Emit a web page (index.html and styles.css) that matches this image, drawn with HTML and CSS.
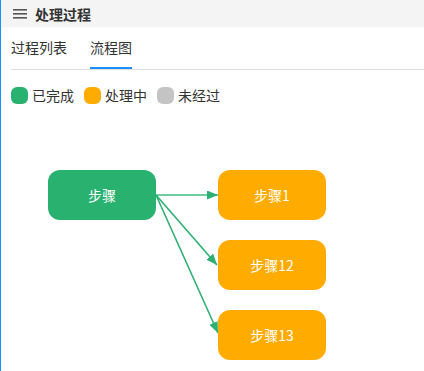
FILE: index.html
```html
<!DOCTYPE html>
<html lang="zh">
<head>
    <meta charset="UTF-8">
    <title>处理过程</title>
    <link rel="stylesheet" href="styles.css">
</head>
<body>
    <div class="page">
        <div class="header">
            <svg class="menu-icon" width="14" height="10" viewBox="0 0 14 10">
                <rect x="0" y="0" width="14" height="1.6" fill="#555"/>
                <rect x="0" y="4" width="14" height="1.6" fill="#555"/>
                <rect x="0" y="8" width="14" height="1.6" fill="#555"/>
            </svg>
            <span class="title">处理过程</span>
        </div>

        <div class="tabs">
            <div class="tab">过程列表</div>
            <div class="tab active">流程图</div>
        </div>

        <div class="legend">
            <div class="legend-item"><span class="dot done"></span>已完成</div>
            <div class="legend-item"><span class="dot doing"></span>处理中</div>
            <div class="legend-item"><span class="dot none"></span>未经过</div>
        </div>

        <div class="canvas">
            <svg class="edges" width="423" height="261">
                <defs>
                    <marker id="arrow" markerWidth="11" markerHeight="9" refX="11" refY="4.5" orient="auto" markerUnits="userSpaceOnUse">
                        <path d="M0,0 L11,4.5 L0,9 Z" fill="#2eb072"/>
                    </marker>
                </defs>
                <line x1="155" y1="85" x2="217" y2="85" stroke="#3dbb80" stroke-width="1.6" marker-end="url(#arrow)"/>
                <line x1="155" y1="85" x2="216" y2="155" stroke="#2eb072" stroke-width="1.6" marker-end="url(#arrow)"/>
                <line x1="155" y1="85" x2="217" y2="223" stroke="#2eb072" stroke-width="1.6" marker-end="url(#arrow)"/>
            </svg>
            <div class="node done" style="left: 47px; top: 60px;">步骤</div>
            <div class="node doing" style="left: 217px; top: 60px;">步骤1</div>
            <div class="node doing" style="left: 217px; top: 130px;">步骤12</div>
            <div class="node doing" style="left: 217px; top: 200px;">步骤13</div>
        </div>
    </div>
</body>
</html>
```

FILE: styles.css
```css
body {
    margin: 0;
    font-family: "Noto Sans CJK SC", "Noto Sans", sans-serif;
    color: #333;
    background: #fff;
}
.page {
    border-left: 1px solid #1890ff;
    height: 371px;
    box-sizing: border-box;
    overflow: hidden;
}
.header {
    height: 27px;
    background-color: #f4f4f4;
    display: flex;
    align-items: center;
    padding-left: 12px;
}
.menu-icon {
    margin-right: 8px;
}
.title {
    font-size: 14px;
    font-weight: bold;
    color: #333;
}
.tabs {
    display: flex;
    gap: 23px;
    margin-left: 10px;
    border-bottom: 1px solid #ddd;
    height: 43px;
    box-sizing: border-box;
}
.tab {
    font-size: 14px;
    line-height: 14px;
    padding-top: 13px;
    height: 42px;
    box-sizing: border-box;
    color: #333;
}
.tab.active {
    border-bottom: 2px solid #1890ff;
}
.legend {
    display: flex;
    align-items: center;
    gap: 10px;
    margin: 16px 0 0 10px;
    font-size: 14px;
    line-height: 18px;
}
.legend-item {
    display: flex;
    align-items: center;
    gap: 4px;
}
.dot {
    width: 17px;
    height: 17px;
    border-radius: 6px;
}
.dot.done {
    background-color: #28b16f;
}
.dot.doing {
    background-color: #ffab00;
}
.dot.none {
    background-color: #c4c4c4;
}
.canvas {
    position: relative;
    height: 261px;
    margin-top: 6px;
}
.edges {
    position: absolute;
    left: 0;
    top: 0;
}
.node {
    position: absolute;
    width: 108px;
    height: 50px;
    border-radius: 12px;
    display: flex;
    justify-content: center;
    align-items: center;
    color: #fff;
    font-size: 14px;
}
.node.done {
    background-color: #28b16f;
}
.node.doing {
    background-color: #ffab00;
}
```
